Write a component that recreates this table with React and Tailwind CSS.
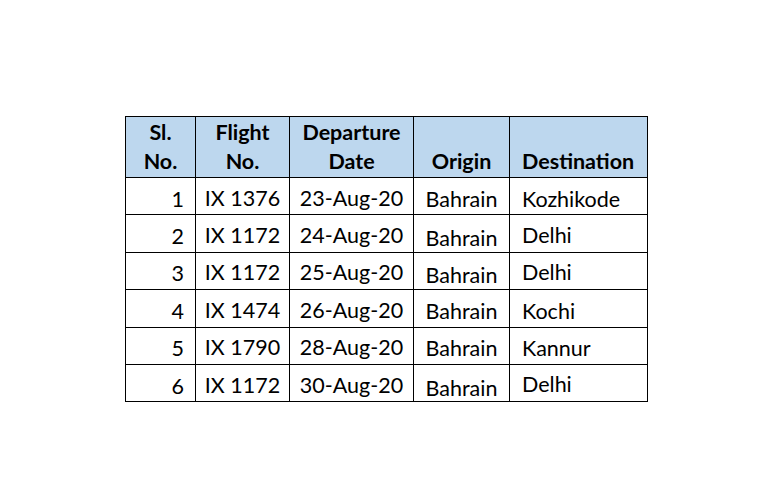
export default function App() {
  const flights = [
    { no: 1, flight: "IX 1376", date: "23-Aug-20", origin: "Bahrain", dest: "Kozhikode", low: false },
    { no: 2, flight: "IX 1172", date: "24-Aug-20", origin: "Bahrain", dest: "Delhi", low: true },
    { no: 3, flight: "IX 1172", date: "25-Aug-20", origin: "Bahrain", dest: "Delhi", low: true },
    { no: 4, flight: "IX 1474", date: "26-Aug-20", origin: "Bahrain", dest: "Kochi", low: false },
    { no: 5, flight: "IX 1790", date: "28-Aug-20", origin: "Bahrain", dest: "Kannur", low: false },
    { no: 6, flight: "IX 1172", date: "30-Aug-20", origin: "Bahrain", dest: "Delhi", low: true },
  ];

  return (
    <main className="w-[765px] h-[501px] bg-white pt-[116px] pl-[125px] text-black font-['Lato',sans-serif] text-[21.5px]">
      <table className="border-collapse table-fixed w-[522px]">
        <colgroup>
          <col className="w-[70px]" />
          <col className="w-[94px]" />
          <col className="w-[124px]" />
          <col className="w-[96px]" />
          <col className="w-[138px]" />
        </colgroup>
        <thead>
          <tr className="h-[61px] bg-[#bdd7ee] font-bold leading-[29px]">
            <th className="border border-black align-bottom text-center pb-[1px] font-bold">
              Sl.<br />No.
            </th>
            <th className="border border-black align-bottom text-center pb-[1px] font-bold">
              Flight<br />No.
            </th>
            <th className="border border-black align-bottom text-center pb-[1px] font-bold">
              Departure<br />Date
            </th>
            <th className="border border-black align-bottom text-center pb-[1px] font-bold">
              Origin
            </th>
            <th className="border border-black align-bottom text-left pl-[12px] pb-[1px] font-bold">
              Destination
            </th>
          </tr>
        </thead>
        <tbody>
          {flights.map((f, i) => (
            <tr key={i} className="h-[37.4px] leading-[24px]">
              <td className="border border-black text-right pr-[11px] pt-[5px] align-middle">{f.no}</td>
              <td className="border border-black text-center pt-[3px] align-middle">{f.flight}</td>
              <td className="border border-black text-center pt-[3px] align-middle">{f.date}</td>
              <td className={"border border-black text-center align-middle " + (f.low ? "pt-[9px]" : "pt-[5px]")}>
                {f.origin}
              </td>
              <td className={"border border-black text-left pl-[12px] align-middle " + (f.low ? "pt-[2px]" : "pt-[5px]")}>
                {f.dest}
              </td>
            </tr>
          ))}
        </tbody>
      </table>
    </main>
  );
}
